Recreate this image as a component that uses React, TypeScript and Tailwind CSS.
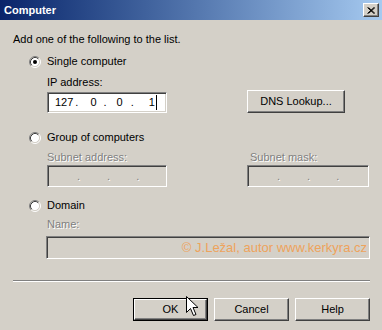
import React from 'react';

const FONT = { fontFamily: '"Liberation Sans", Arial, sans-serif' };

function Radio({ checked }: { checked?: boolean }) {
  return (
    <svg width="12" height="12" viewBox="0 0 12 12" className="shrink-0">
      <circle cx="6" cy="6" r="4.5" fill="#ffffff" />
      <path d="M2.11 9.89 A5.5 5.5 0 0 1 9.89 2.11" stroke="#808080" fill="none" />
      <path d="M9.89 2.11 A5.5 5.5 0 0 1 2.11 9.89" stroke="#ffffff" fill="none" />
      <path d="M2.82 9.18 A4.5 4.5 0 0 1 9.18 2.82" stroke="#404040" fill="none" />
      <path d="M9.18 2.82 A4.5 4.5 0 0 1 2.82 9.18" stroke="#d4d0c8" fill="none" />
      {checked && <circle cx="6" cy="6" r="2" fill="#000000" />}
    </svg>
  );
}

function Button({ label, def, w }: { label: string; def?: boolean; w: string }) {
  if (def) {
    return (
      <div className={`${w} h-[23px] border border-black`}>
        <div className="h-full border border-t-white border-l-white border-r-[#404040] border-b-[#404040] shadow-[inset_-1px_-1px_0_#808080] flex items-center justify-center text-[11px] text-black">
          {label}
        </div>
      </div>
    );
  }
  return (
    <div
      className={`${w} h-[23px] border border-t-white border-l-white border-r-[#404040] border-b-[#404040] shadow-[inset_-1px_-1px_0_#808080] flex items-center justify-center text-[11px] text-black`}
    >
      {label}
    </div>
  );
}

function Sunken({ w, h, disabled, children }: { w: string; h: string; disabled?: boolean; children?: React.ReactNode }) {
  return (
    <div
      className={`${w} ${h} border border-t-[#808080] border-l-[#808080] border-r-white border-b-white shadow-[inset_1px_1px_0_#404040,inset_-1px_-1px_0_#d4d0c8] ${
        disabled ? 'bg-[#d4d0c8]' : 'bg-white'
      } flex items-center`}
    >
      {children}
    </div>
  );
}

function DisabledLabel({ children }: { children: React.ReactNode }) {
  return <span className="text-[#808080] [text-shadow:1px_1px_0_#ffffff]">{children}</span>;
}

function DisabledDots() {
  return (
    <div className="flex items-center text-[11px] text-[#808080] [text-shadow:1px_1px_0_#ffffff]">
      <span className="ml-[29px]">.</span>
      <span className="ml-[27px]">.</span>
      <span className="ml-[26px]">.</span>
    </div>
  );
}

export default function App() {
  return (
    <div className="relative w-[382px] h-[330px] bg-[#d4d0c8] overflow-hidden text-[11px] text-black" style={FONT}>
      {/* Title bar */}
      <div className="h-[20px] flex items-center bg-gradient-to-r from-[#0a246a] to-[#a6caf0]">
        <span className="pl-[4px] font-bold text-white text-[11px]">Computer</span>
        <div className="ml-auto mr-[3px] w-[16px] h-[14px] bg-[#d4d0c8] border border-t-white border-l-white border-r-[#404040] border-b-[#404040] shadow-[inset_-1px_-1px_0_#808080] flex items-center justify-center">
          <svg width="8" height="7" viewBox="0 0 8 7">
            <path d="M0.5 0.5 L7 6.5 M1.5 0.5 L8 6.5 M7 0.5 L0.5 6.5 M8 0.5 L1.5 6.5" stroke="#000" strokeWidth="1" />
          </svg>
        </div>
      </div>

      <div className="pl-[13px] pr-[12px]">
        <div className="mt-[13px] h-[13px] leading-[13px]">Add one of the following to the list.</div>

        {/* Single computer */}
        <div className="mt-[9px] h-[13px] flex items-center pl-[16px]">
          <Radio checked />
          <span className="ml-[6px] leading-[13px]">Single computer</span>
        </div>
        <div className="mt-[8px] h-[13px] leading-[13px] pl-[34px]">IP address:</div>
        <div className="mt-[1px] h-[23px] flex items-end pl-[34px]">
          <Sunken w="w-[120px]" h="h-[21px]">
            <span className="ml-[7px]">127</span>
            <span className="ml-[2px]">.</span>
            <span className="ml-[12px]">0</span>
            <span className="ml-[7px]">.</span>
            <span className="ml-[10px]">0</span>
            <span className="ml-[8px]">.</span>
            <span className="ml-[15px]">1</span>
            <span className="ml-[1px] w-[1px] h-[15px] bg-black" />
          </Sunken>
          <div className="ml-[80px] self-stretch">
            <Button label="DNS Lookup..." w="w-[98px]" />
          </div>
        </div>

        {/* Group of computers */}
        <div className="mt-[18px] h-[13px] flex items-center pl-[16px]">
          <Radio />
          <span className="ml-[6px] leading-[13px]">Group of computers</span>
        </div>
        <div className="mt-[7px] h-[13px] leading-[13px] flex pl-[34px]">
          <div className="w-[203px]">
            <DisabledLabel>Subnet address:</DisabledLabel>
          </div>
          <DisabledLabel>Subnet mask:</DisabledLabel>
        </div>
        <div className="mt-[1px] flex pl-[34px]">
          <Sunken w="w-[120px]" h="h-[22px]" disabled>
            <DisabledDots />
          </Sunken>
          <div className="ml-[80px]">
            <Sunken w="w-[122px]" h="h-[22px]" disabled>
              <DisabledDots />
            </Sunken>
          </div>
        </div>

        {/* Domain */}
        <div className="mt-[12px] h-[13px] flex items-center pl-[16px]">
          <Radio />
          <span className="ml-[6px] leading-[13px]">Domain</span>
        </div>
        <div className="mt-[6px] h-[13px] leading-[13px] pl-[34px]">
          <DisabledLabel>Name:</DisabledLabel>
        </div>
        <div className="mt-[5px] pl-[33px]">
          <Sunken w="w-[324px]" h="h-[23px]" disabled>
            <span className="ml-auto mr-[2px] text-[13px] text-[#eea35c]">© J.Ležal, autor www.kerkyra.cz</span>
          </Sunken>
        </div>

        {/* Separator */}
        <div className="mt-[21px] w-[357px]">
          <div className="h-[1px] bg-[#808080]" />
          <div className="h-[1px] bg-white" />
        </div>

        {/* Buttons */}
        <div className="mt-[16px] flex pl-[120px] gap-[6px]">
          <Button label="OK" def w="w-[75px]" />
          <Button label="Cancel" w="w-[75px]" />
          <Button label="Help" w="w-[75px]" />
        </div>
      </div>

      {/* Mouse cursor */}
      <svg className="absolute left-[186px] top-[296px]" width="13" height="21" viewBox="0 0 13 21">
        <path
          d="M0.5 0.5 L0.5 16.5 L4.5 12.5 L7.5 19.5 L10 18.5 L7 11.5 L12 11.5 Z"
          fill="#ffffff"
          stroke="#000000"
          strokeWidth="1"
          strokeLinejoin="miter"
        />
      </svg>
    </div>
  );
}
